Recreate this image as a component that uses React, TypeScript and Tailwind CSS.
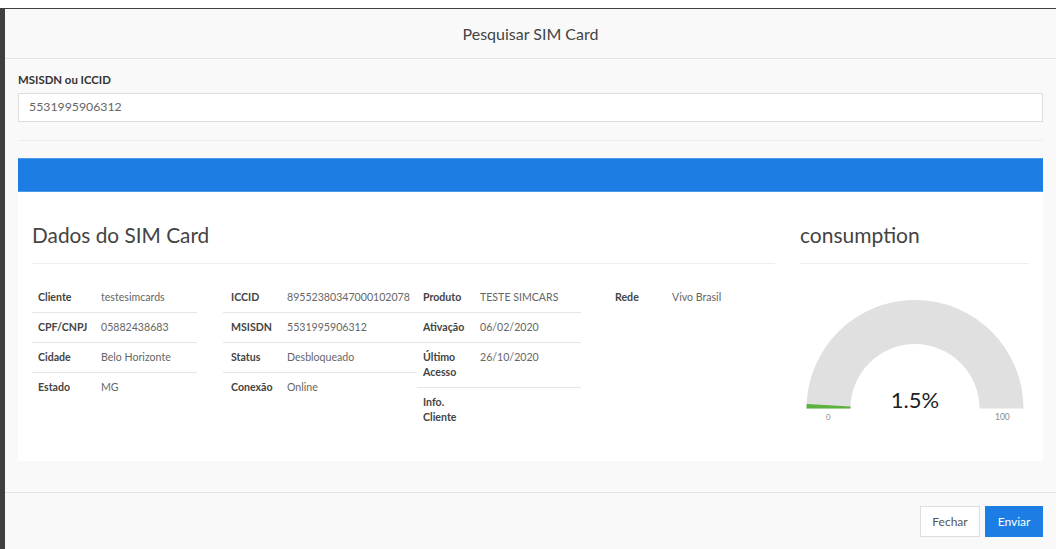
const tableCols = [
  {
    className: 'w-[165px]',
    rows: [
      ['Cliente', 'testesimcards'],
      ['CPF/CNPJ', '05882438683'],
      ['Cidade', 'Belo Horizonte'],
      ['Estado', 'MG'],
    ],
    labelW: 'w-[63px]',
  },
  {
    className: 'w-[194px] ml-[26px]',
    rows: [
      ['ICCID', '89552380347000102078'],
      ['MSISDN', '5531995906312'],
      ['Status', 'Desbloqueado'],
      ['Conexão', 'Online'],
    ],
    labelW: 'w-[56px] ml-[2px]',
  },
  {
    className: 'w-[164px]',
    rows: [
      ['Produto', 'TESTE SIMCARS'],
      ['Ativação', '06/02/2020'],
      ['Último Acesso', '26/10/2020'],
      ['Info. Cliente', ''],
    ],
    labelW: 'w-[57px]',
  },
  {
    className: 'w-[165px] ml-[28px]',
    rows: [['Rede', 'Vivo Brasil']],
    labelW: 'w-[57px]',
  },
];

function Gauge() {
  return (
    <div className="relative mt-[35px] ml-[6px] h-[128px] w-[218px]">
      <svg width="218" height="110" viewBox="0 0 218 110" className="block">
        <path d="M0.5 109.5 A108.5 108.5 0 0 1 217.5 109.5 L173.5 109.5 A64.5 64.5 0 0 0 44.5 109.5 Z" fill="#e0e0e0" />
        <path d="M0.5 109.5 A108.5 108.5 0 0 1 0.7 105 L44.6 107.6 A64.5 64.5 0 0 0 44.5 109.5 Z" fill="#5cb23e" />
      </svg>
      <span className="absolute left-0 top-[88px] w-full text-center text-[22px] leading-[26px] text-[#222]">1.5%</span>
      <span className="absolute left-[20px] top-[113px] text-[8px] leading-[10px] text-[#888]">0</span>
      <span className="absolute left-[189px] top-[113px] text-[8.5px] leading-[10px] text-[#888]">100</span>
    </div>
  );
}

export default function App() {
  return (
    <div className="flex h-[549px] w-[1062px] flex-col overflow-hidden bg-white font-['Lato','Open_Sans',sans-serif] text-[#555]">
      <div className="h-[8px] shrink-0" />
      <div className="flex min-h-0 w-[1056px] flex-1 border-t border-l-[5px] border-[#3f3f3f] bg-[#f9f9f9]">
        <div className="flex min-w-0 flex-1 flex-col">
          <div className="flex h-[50px] shrink-0 items-center justify-center border-b border-[#e5e5e5] text-[16px] text-[#444]">
            Pesquisar SIM Card
          </div>

          <div className="flex flex-1 flex-col px-[13px]">
            <div className="mt-[14px] text-[11.4px] leading-[14px] font-bold text-[#333]">MSISDN ou ICCID</div>
            <div className="mt-[6px] flex h-[29px] items-center border border-[#ddd] bg-white px-[10px] text-[12.3px] text-[#666]">
              5531995906312
            </div>
            <div className="mt-[18px] border-t border-[#eeeeee]" />

            <div className="mt-[17px] h-[34px] border-y border-[#4b98e8] bg-[#1c7ee4]" />

            <div className="flex h-[269px] bg-white pl-[14px]">
              <div className="w-[743px]">
                <h2 className="flex h-[72px] items-end border-b border-[#eeeeee] pb-[14px] text-[20.8px] leading-[28px] text-[#444]">
                  Dados do SIM Card
                </h2>
                <div className="mt-[19px] flex text-[10.6px] leading-[15px]">
                  {tableCols.map((col) => (
                    <div key={col.rows[0][0]} className={col.className}>
                      {col.rows.map(([label, value], i) => (
                        <div
                          key={label}
                          className={`flex px-[6px] py-[7px] ${i < col.rows.length - 1 ? 'border-b border-[#e6e6e6]' : ''}`}
                        >
                          <span className={`${col.labelW} shrink-0 font-bold text-[#444]`}>{label}</span>
                          <span className="text-[#666]">{value}</span>
                        </div>
                      ))}
                    </div>
                  ))}
                </div>
              </div>

              <div className="ml-[25px] w-[229px]">
                <h2 className="flex h-[72px] items-end border-b border-[#eeeeee] pb-[14px] text-[21px] leading-[28px] text-[#444]">
                  consumption
                </h2>
                <Gauge />
              </div>
            </div>
          </div>

          <div className="flex h-[57px] shrink-0 items-start justify-end gap-[5px] border-t border-[#e5e5e5] pt-[13px] pr-[13px]">
            <button className="h-[31px] w-[60px] border border-[#ddd] bg-white text-[12px] text-[#555]">Fechar</button>
            <button className="h-[31px] w-[58px] bg-[#1c7ee4] text-[12px] text-white">Enviar</button>
          </div>
        </div>
      </div>
    </div>
  );
}
